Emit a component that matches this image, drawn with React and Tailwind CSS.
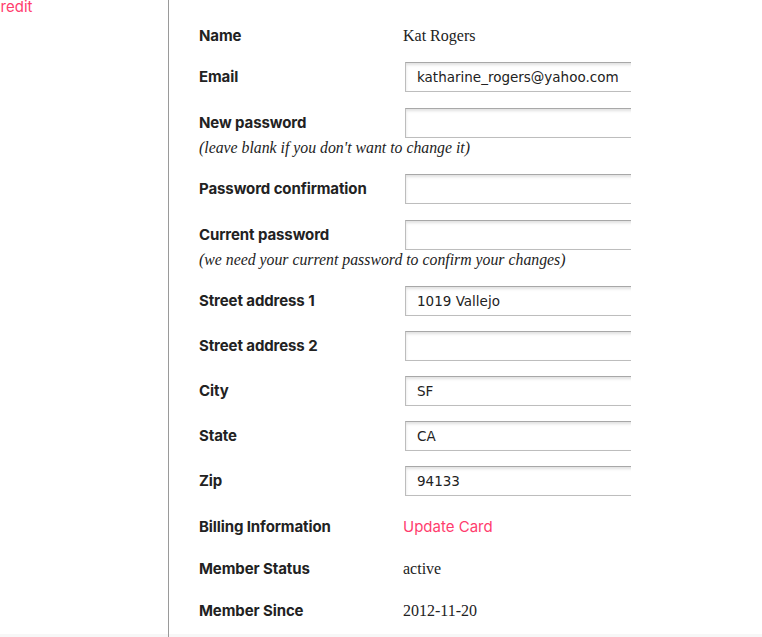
import React from "react";

const labelCls = "w-[204px] shrink-0 text-[15px] font-bold text-[#222] [font-family:Inter,'Noto_Sans',sans-serif] tracking-[-0.1px]";
const serifVal = "text-[16px] text-[#222] [font-family:'Liberation_Serif',serif]";

function Input({ value }) {
  return (
    <div className="w-[228px] h-[30px] overflow-hidden pl-[2px]">
      <input
        readOnly
        defaultValue={value}
        className="w-[260px] h-[30px] border border-[#bdbdbd] border-t-[#a8a8a8] shadow-[inset_0_2px_3px_rgba(0,0,0,0.12)] pl-[11px] text-[13.5px] text-[#222] [font-family:'DejaVu_Sans',sans-serif] outline-none bg-white"
      />
    </div>
  );
}

function Row({ label, children, className = "" }) {
  return (
    <div className={"flex items-center h-[30px] " + className}>
      <div className={labelCls}>{label}</div>
      {children}
    </div>
  );
}

function Hint({ children }) {
  return (
    <div className="h-5 flex items-center text-[15.8px] italic text-[#222] [font-family:'Liberation_Serif',serif]">
      {children}
    </div>
  );
}

export default function App() {
  return (
    <div className="w-[762px] h-[637px] bg-[#f7f7f7] overflow-hidden flex">
      <div className="w-[169px] shrink-0 h-[637px] border-r border-[#9a9a9a]">
        <div className="h-[634px] bg-white overflow-hidden">
          <div className="-ml-[8px] -mt-[4px] text-[15px] text-[#ff3d6e] [font-family:Inter,'Noto_Sans',sans-serif]">
            credit
          </div>
        </div>
      </div>
      <div className="flex-1 h-[634px] bg-white pl-[30px] pt-[21px] flex flex-col">
        <Row label="Name">
          <div className={serifVal}>Kat Rogers</div>
        </Row>
        <Row label="Email" className="mt-[11px]">
          <Input value="katharine_rogers@yahoo.com" />
        </Row>
        <Row label="New password" className="mt-4">
          <Input value="" />
        </Row>
        <Hint>(leave blank if you don't want to change it)</Hint>
        <Row label="Password confirmation" className="mt-4">
          <Input value="" />
        </Row>
        <Row label="Current password" className="mt-4">
          <Input value="" />
        </Row>
        <Hint>(we need your current password to confirm your changes)</Hint>
        <Row label="Street address 1" className="mt-4">
          <Input value="1019 Vallejo" />
        </Row>
        <Row label="Street address 2" className="mt-[15px]">
          <Input value="" />
        </Row>
        <Row label="City" className="mt-[15px]">
          <Input value="SF" />
        </Row>
        <Row label="State" className="mt-[15px]">
          <Input value="CA" />
        </Row>
        <Row label="Zip" className="mt-[15px]">
          <Input value="94133" />
        </Row>
        <Row label="Billing Information" className="mt-4">
          <a className="text-[15px] text-[#ff3d6e] [font-family:Inter,'Noto_Sans',sans-serif]">Update Card</a>
        </Row>
        <Row label="Member Status" className="mt-3">
          <div className={serifVal}>active</div>
        </Row>
        <Row label="Member Since" className="mt-3">
          <div className={serifVal}>2012-11-20</div>
        </Row>
      </div>
    </div>
  );
}
